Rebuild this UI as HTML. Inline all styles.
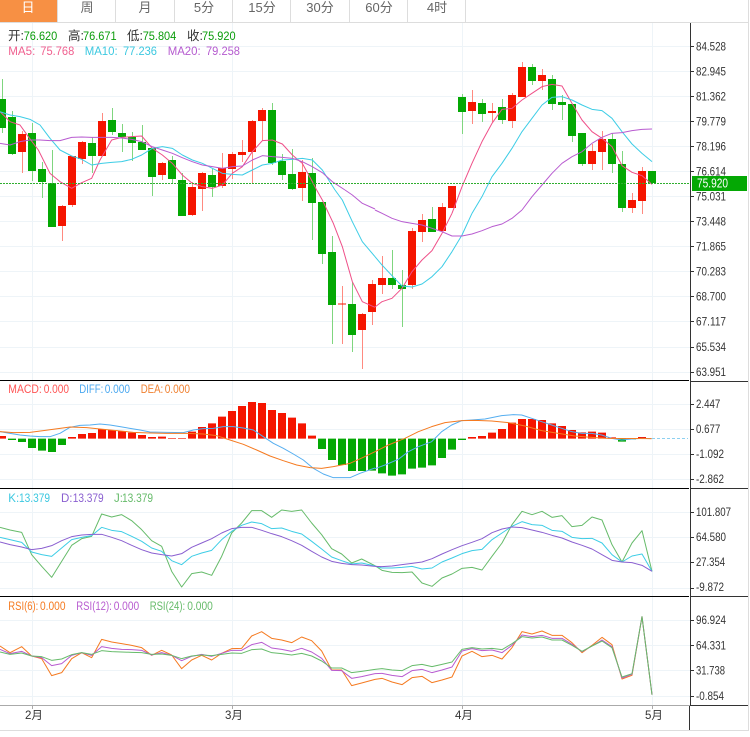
<!DOCTYPE html>
<html><head><meta charset="utf-8"><style>
html,body{margin:0;padding:0;background:#fff}
svg{display:block;font-family:"Liberation Sans","Noto Sans CJK SC",sans-serif}
.l{fill:none;stroke-width:1;vector-effect:non-scaling-stroke;stroke-linejoin:round}
.l polyline{fill:none;stroke-width:1;vector-effect:non-scaling-stroke}
.g{stroke:#eef4f8;stroke-width:1;fill:none}
.a text{font-size:11.5px;fill:#333}
.t text{font-size:13px;fill:#666;text-anchor:middle}
.k text{font-size:11.5px}
.k .c{font-size:12.5px}
</style></head><body>
<svg width="750" height="737" viewBox="0 0 750 737" xmlns="http://www.w3.org/2000/svg">
<rect width="750" height="737" fill="#fff"/>
<!-- tabs -->
<rect x="0" y="0" width="57" height="22" fill="#f79044"/>
<path d="M57.5 0V22M115.5 0V22M174.5 0V22M232.5 0V22M290.5 0V22M349.5 0V22M407.5 0V22M465.5 0V22M0 22.5H748" stroke="#ddd" fill="none"/>
<path d="M748.5 0V730M0 730.5H749" stroke="#ddd" fill="none"/>
<g class="t">
<text x="28" y="12" style="fill:#fff">日</text><text x="87" y="12">周</text><text x="145" y="12">月</text><text x="204" y="12">5分</text><text x="262" y="12">15分</text><text x="320" y="12">30分</text><text x="379" y="12">60分</text><text x="437" y="12">4时</text>
</g>
<!-- grid -->
<path class="g" d="M0 46.5H690M0 71.5H690M0 96.5H690M0 121.5H690M0 146.5H690M0 171.5H690M0 196.5H690M0 221.5H690M0 246.5H690M0 271.5H690M0 296.5H690M0 321.5H690M0 347.5H690M0 372.5H690M0 404.5H690M0 429.5H690M0 454.5H690M0 479.5H690M0 512.5H690M0 537.5H690M0 562.5H690M0 588.5H690M0 620.5H690M0 645.5H690M0 670.5H690M0 696.5H690M32.5 23V705M232.5 23V705M462.5 23V705M652.5 23V705"/>
<!-- candles -->
<path fill="none" stroke="#7fd67f" stroke-width="1" d="M2.5 79V133M12.5 111V155M32.5 123V181M42.5 162V198M52.5 150V227M92.5 137V173M112.5 108V135M122.5 124V152M132.5 132V161M142.5 125V150M152.5 148V196M172.5 156V183M182.5 173V216M212.5 169V197M272.5 103V165M282.5 154V180M292.5 149V190M312.5 158V240M322.5 202V264M332.5 236V344M352.5 282V352M392.5 250V289M402.5 270V327M432.5 207V232M462.5 94V134M482.5 99V122M502.5 99V124M532.5 64V85M552.5 75V110M562.5 95V120M572.5 104V142M582.5 133V166M612.5 133V173M622.5 151V212M652.5 171V183"/>
<path fill="none" stroke="#ff8a80" stroke-width="1" d="M22.5 131V173M62.5 205V241M72.5 156V207M82.5 141V164M102.5 113V156M162.5 162V180M192.5 182V216M202.5 172V211M222.5 153V188M232.5 152V179M242.5 140V162M252.5 120V183M262.5 108V141M302.5 160V201M342.5 286V344M362.5 313V369M372.5 280V325M382.5 256V294M412.5 228V289M422.5 214V242M442.5 203V231M452.5 186V208M472.5 90V124M492.5 103V122M512.5 93V128M522.5 62V97M542.5 69V90M592.5 144V170M602.5 131V170M632.5 193V213M642.5 167V214"/>
<path fill="none" stroke="#04a804" stroke-width="8" d="M2 99V128M12 117V154M32 133V171M42 169V182M52 183V227M92 143V156M112 120V132M122 133V137M132 137V143M142 142V150M152 148V177M172 160V179M182 180V216M212 175V187M272 110V163M282 161V175M292 174V189M312 173V203M322 202V254M332 252V305M352 304V335M392 278V285M402 285V289M432 219V232M462 97V112M482 103V114M502 107V120M532 67V81M552 79V104M562 102V105M572 104V136M582 133V164M612 139V164M622 164V208M652 171V183"/>
<path fill="none" stroke="#f51500" stroke-width="8" d="M22 134V152M62 206V226M72 156V205M82 142V159M102 121V156M162 163V175M192 187V215M202 173V189M222 168V186M232 154V169M242 152V155M252 121V152M262 110V121M302 172V188M342 303.5V304.5M362 314V330M372 284V312M382 278V285M412 231V285M422 220V232M442 207V231M452 186V208M472 102V111M492 111V113M512 95V121M522 67V97M542 75V81M592 151V164M602 139V152M632 200V208M642 171V201"/>
<!-- MA lines -->
<g transform="scale(.33333)">
<polyline class="l" stroke="#ef4f88" points="0,335 30,365 60,375 85,410 115,450 150,520 180,545 215,565 245,548 275,535 300,480 335,420 365,412 395,410 425,408 457,445 487,465 517,490 547,525 577,550 607,560 637,565 667,555 697,520 727,500 757,455 787,422 817,420 847,432 877,465 907,490 937,545 950,570"/>
<polyline class="l" stroke="#3dcde6" points="0,335 30,345 60,350 90,358 120,375 150,415 180,450 215,468 245,478 275,495 305,490 335,487 365,485 395,478 425,465 457,445 487,440 517,445 547,465 577,480 607,490 637,505 667,520 697,523 727,525 757,510 787,495 817,490 847,480 877,478 907,475 937,480 967,510 1005,570"/>
<polyline class="l" stroke="#b85bd0" points="0,430 30,435 60,425 90,420 120,420 150,422 180,422 215,412 245,411 275,412 305,412 335,412 365,414 395,418 425,425 457,440 487,450 517,460 547,473 577,485 607,495 637,500 667,505 697,500 727,498 757,480 787,467 817,470 847,472 877,475 907,485 937,500 967,518 997,545 1035,570"/>
</g>
<g transform="translate(0,190) scale(.33333)">
<polyline class="l" stroke="#ef4f88" points="950,0 967,30 1000,100 1027,170 1057,275 1087,335 1125,352"/>
<polyline class="l" stroke="#3dcde6" points="1005,0 1027,30 1057,95 1087,155 1125,200"/>
<polyline class="l" stroke="#b85bd0" points="1035,0 1057,15 1087,40 1125,57"/>
</g>
<g transform="translate(375,210) scale(.33333)">
<polyline class="l" stroke="#ef4f88" points="0,291 21,275 51,265 81,235 111,185 141,150 171,122 201,70 231,10"/>
<polyline class="l" stroke="#3dcde6" points="0,140 21,165 51,197 81,228 111,231 141,222 171,200 201,170 231,125 261,75 291,10"/>
<polyline class="l" stroke="#b85bd0" points="0,0 21,10 51,25 81,35 111,40 141,45 171,55 201,65 231,78 261,78 291,72 321,62 351,50 381,42 411,25 441,0"/>
</g>
<g transform="translate(375,0) scale(.33333)">
<polyline class="l" stroke="#ef4f88" points="231,640 261,560 291,490 321,425 351,370 381,328 411,325 441,300 471,280 501,260 531,253 561,258 591,310 621,360 651,395 681,415 711,440 741,497 771,517 801,527 831,553"/>
<polyline class="l" stroke="#3dcde6" points="291,640 321,590 351,530 381,490 411,445 441,395 471,355 501,315 531,292 561,290 591,300 621,315 651,328 681,332 711,355 741,395 771,432 801,460 831,485"/>
<polyline class="l" stroke="#b85bd0" points="441,630 471,590 501,555 531,520 561,490 591,470 621,455 651,430 681,412 711,400 741,398 771,392 801,388 831,387"/>
</g>
<!-- dotted price -->
<path d="M0 183.5H690" stroke="#2fae2f" stroke-dasharray="2 1" fill="none"/>
<!-- legend -->
<g class="k">
<text class="c" x="8" y="40" fill="#333">开:</text><text x="23.7" y="40" fill="#0a9c0a" textLength="33.6" lengthAdjust="spacingAndGlyphs">76.620</text>
<text class="c" x="68" y="40" fill="#333">高:</text><text x="83" y="40" fill="#0a9c0a" textLength="33.6" lengthAdjust="spacingAndGlyphs">76.671</text>
<text class="c" x="127" y="40" fill="#333">低:</text><text x="142.7" y="40" fill="#0a9c0a" textLength="33.6" lengthAdjust="spacingAndGlyphs">75.804</text>
<text class="c" x="187" y="40" fill="#333">收:</text><text x="202" y="40" fill="#0a9c0a" textLength="33.6" lengthAdjust="spacingAndGlyphs">75.920</text>
<text x="8.3" y="55" fill="#f0608f" textLength="27" lengthAdjust="spacingAndGlyphs">MA5:</text><text x="40.3" y="55" fill="#f0608f" textLength="34" lengthAdjust="spacingAndGlyphs">75.768</text>
<text x="84.7" y="55" fill="#3cc8e0" textLength="33" lengthAdjust="spacingAndGlyphs">MA10:</text><text x="123" y="55" fill="#3cc8e0" textLength="34" lengthAdjust="spacingAndGlyphs">77.236</text>
<text x="167.7" y="55" fill="#b55bcf" textLength="33" lengthAdjust="spacingAndGlyphs">MA20:</text><text x="206" y="55" fill="#b55bcf" textLength="34" lengthAdjust="spacingAndGlyphs">79.258</text>
<text x="8.3" y="393" fill="#f55" textLength="33.5" lengthAdjust="spacingAndGlyphs">MACD:</text><text x="43.7" y="393" fill="#f55" textLength="25.3" lengthAdjust="spacingAndGlyphs">0.000</text>
<text x="79.3" y="393" fill="#4aa8f0" textLength="24" lengthAdjust="spacingAndGlyphs">DIFF:</text><text x="104.7" y="393" fill="#4aa8f0" textLength="25.3" lengthAdjust="spacingAndGlyphs">0.000</text>
<text x="140.7" y="393" fill="#f08030" textLength="22.5" lengthAdjust="spacingAndGlyphs">DEA:</text><text x="164.7" y="393" fill="#f08030" textLength="25.3" lengthAdjust="spacingAndGlyphs">0.000</text>
<text x="8.3" y="502" fill="#3cc8e0">K:</text><text x="19" y="502" fill="#3cc8e0" textLength="31" lengthAdjust="spacingAndGlyphs">13.379</text>
<text x="61" y="502" fill="#8a5fd0">D:</text><text x="72.7" y="502" fill="#8a5fd0" textLength="31" lengthAdjust="spacingAndGlyphs">13.379</text>
<text x="114" y="502" fill="#66bb6a">J:</text><text x="122" y="502" fill="#66bb6a" textLength="31" lengthAdjust="spacingAndGlyphs">13.379</text>
<text x="8.3" y="610" fill="#f57a20" textLength="30" lengthAdjust="spacingAndGlyphs">RSI(6):</text><text x="40" y="610" fill="#f57a20" textLength="25.5" lengthAdjust="spacingAndGlyphs">0.000</text>
<text x="76.3" y="610" fill="#b85bd0" textLength="35.5" lengthAdjust="spacingAndGlyphs">RSI(12):</text><text x="113.7" y="610" fill="#b85bd0" textLength="25.5" lengthAdjust="spacingAndGlyphs">0.000</text>
<text x="149.7" y="610" fill="#66bb6a" textLength="35.5" lengthAdjust="spacingAndGlyphs">RSI(24):</text><text x="187.3" y="610" fill="#66bb6a" textLength="25.5" lengthAdjust="spacingAndGlyphs">0.000</text>
</g>
<!-- MACD bars -->
<g transform="translate(0,380) scale(1,.33333)">
<path fill="none" stroke="#f51500" stroke-width="8" d="M2 176V168M72 176V171M82 176V162M92 176V159M102 176V147M112 176V150M122 176V153M132 176V158M142 176V165M152 176V171M162 176V170M172 176V174M182 176V174M192 176V155M202 176V141M212 176V130M222 176V110M232 176V93M242 176V78M252 176V66M262 176V69M272 176V90M282 176V99M292 176V113M302 176V130M312 176V167M472 176V171M482 176V168M492 176V158M502 176V147M512 176V128M522 176V117M532 176V117M542 176V120M552 176V130M562 176V138M572 176V150M582 176V157M592 176V155M602 176V158M612 176V172M642 176V171"/>
<path fill="none" stroke="#04a804" stroke-width="8" d="M12 176V180M22 176V186M32 176V204M42 176V212M52 176V216M62 176V195M322 176V207M332 176V240M342 176V255M352 176V273M362 176V273M372 176V272M382 176V280M392 176V287M402 176V283M412 176V266M422 176V263M432 176V256M442 176V234M452 176V209M462 176V180M622 176V185M632 176V178"/>
</g>
<path d="M652 438.5H688" stroke="#8dd0f0" stroke-dasharray="3 2" fill="none"/>
<g transform="translate(0,380) scale(.33333)">
<polyline class="l" stroke="#55aef0" points="0,155 30,160 60,165 90,168 120,170 150,170 180,160 210,142 240,136 270,135 300,132 330,135 360,140 390,145 420,150 450,156 500,157 550,158 580,150 610,146 640,145 670,140 700,140 730,144 760,150 790,170 820,190 850,205 880,222 910,240 940,265 970,282 1000,293 1050,293 1080,280 1125,264"/>
<polyline class="l" stroke="#f57a20" points="0,155 40,158 90,157 130,152 180,145 210,141 260,143 300,147 350,152 400,157 450,159 500,160 560,160 610,162 650,167 690,180 730,193 770,210 810,228 850,242 890,255 930,263 965,265 1000,260 1050,250 1090,232 1125,215"/>
</g>
<g transform="translate(375,380) scale(.33333)">
<polyline class="l" stroke="#55aef0" points="0,266 30,255 70,238 100,215 130,200 170,185 200,155 230,135 260,122 290,120 330,117 380,107 415,104 440,105 470,115 500,125 530,135 560,145 590,155 620,160 650,160 680,165 710,175 740,180 770,177 800,175 830,176"/>
<polyline class="l" stroke="#f57a20" points="0,215 40,195 90,175 130,155 170,140 210,128 260,122 300,121 350,123 400,128 450,138 500,152 550,160 600,168 650,172 700,175 830,176"/>
</g>
<!-- KDJ -->
<g transform="translate(0,488) scale(.33333)">
<polyline class="l" stroke="#66bb6a" points="0,118 30,126 65,133 95,200 125,235 155,268 185,220 215,172 245,152 275,145 305,78 335,87 365,80 395,98 425,125 455,158 485,175 515,250 545,297 575,257 605,252 635,262 665,205 695,135 725,105 755,68 785,68 815,88 845,66 875,70 905,66 935,105 965,140 995,182 1025,198 1055,225 1085,213 1125,233"/>
<polyline class="l" stroke="#3dcde6" points="0,148 30,155 65,163 95,192 125,200 155,205 185,180 215,155 245,148 275,143 305,118 335,127 365,131 395,145 425,160 455,180 485,190 515,218 545,230 575,205 605,195 635,187 665,155 695,130 725,112 755,102 785,107 815,122 845,120 875,130 905,138 935,160 965,183 995,207 1025,218 1055,228 1085,225 1125,234"/>
<polyline class="l" stroke="#8a5fd0" points="0,162 30,170 65,177 95,185 125,181 155,173 185,158 215,146 245,141 275,139 305,139 335,148 365,158 395,172 425,185 455,195 485,200 515,204 545,197 575,178 605,165 635,152 665,135 695,122 725,118 755,118 785,127 815,137 845,146 875,158 905,172 935,190 965,207 995,220 1025,226 1055,230 1085,231 1125,235"/>
</g>
<g transform="translate(375,488) scale(.33333)">
<polyline class="l" stroke="#66bb6a" points="0,233 21,247 51,253 81,254 111,252 141,285 171,295 201,270 231,258 261,241 291,238 321,246 351,205 381,165 411,110 441,70 471,80 501,70 531,88 561,83 591,116 621,112 651,87 681,96 711,170 741,222 771,165 801,128 831,250"/>
<polyline class="l" stroke="#3dcde6" points="0,234 21,240 51,240 81,238 111,235 141,243 171,240 201,222 231,210 261,197 291,188 321,184 351,155 381,135 411,115 441,101 471,110 501,112 531,127 561,130 591,148 621,152 651,151 681,165 711,200 741,222 771,204 801,198 831,250"/>
<polyline class="l" stroke="#8a5fd0" points="0,235 21,236 51,234 81,230 111,226 141,222 171,212 201,198 231,185 261,173 291,163 321,152 351,134 381,123 411,117 441,119 471,126 501,133 531,142 561,150 591,162 621,172 651,183 681,200 711,217 741,222 771,224 801,232 831,250"/>
</g>
<!-- RSI -->
<g transform="translate(0,596) scale(.33333)">
<polyline class="l" stroke="#f57a20" points="0,150 30,170 65,152 95,180 125,188 155,239 185,230 215,188 245,170 275,185 305,130 335,138 365,143 395,148 425,155 455,178 485,163 515,177 545,218 575,192 605,178 635,192 665,172 695,158 725,157 755,120 785,107 815,127 845,132 875,140 905,123 935,134 965,165 995,222 1025,222 1055,269 1085,261 1125,250"/>
<polyline class="l" stroke="#b85bd0" points="0,160 30,173 65,166 95,180 125,185 155,209 185,203 215,178 245,170 275,178 305,152 335,157 365,160 395,161 425,163 455,177 485,170 515,178 545,194 575,181 605,175 635,181 665,172 695,163 725,163 755,146 785,139 815,156 845,160 875,166 905,157 935,168 965,187 995,223 1025,224 1055,247 1085,242 1125,233"/>
<polyline class="l" stroke="#66bb6a" points="0,168 30,175 65,171 95,180 125,182 155,193 185,189 215,176 245,170 275,175 305,164 335,167 365,168 395,169 425,170 455,175 485,174 515,178 545,188 575,180 605,177 635,179 665,175 695,171 725,172 755,161 785,159 815,170 845,173 875,177 905,172 935,180 965,195 995,216 1025,216 1055,230 1085,226 1125,220"/>
</g>
<g transform="translate(375,596) scale(.33333)">
<polyline class="l" stroke="#f57a20" points="0,250 21,247 51,258 81,266 111,245 141,241 171,260 201,252 231,243 261,180 291,166 321,182 351,178 381,189 411,155 441,107 471,114 501,105 531,118 561,118 591,140 621,170 651,148 681,124 711,146 741,249 771,238 801,62 831,296"/>
<polyline class="l" stroke="#b85bd0" points="0,233 21,232 51,238 81,242 111,224 141,220 171,230 201,222 231,213 261,165 291,158 321,164 351,162 381,170 411,148 441,117 471,122 501,118 531,127 561,127 591,145 621,167 651,150 681,132 711,152 741,246 771,235 801,62 831,296"/>
<polyline class="l" stroke="#66bb6a" points="0,220 21,218 51,222 81,224 111,209 141,205 171,212 201,205 231,198 261,160 291,155 321,159 351,157 381,161 411,143 441,122 471,126 501,123 531,132 561,132 591,148 621,166 651,150 681,135 711,155 741,243 771,233 801,62 831,296"/>
</g>
<!-- frame lines -->
<path d="M0 380.5H689M0 488.5H689M0 596.5H689" stroke="#000" fill="none"/>
<path d="M690.5 23V705M689.5 705V730M691 381.5H748M691 488.5H748M691 596.5H748M690 705.5H748" stroke="#333" fill="none"/>
<path d="M0 705.5H690M32.5 705V709M232.5 705V709M462.5 705V709M652.5 705V709" stroke="#aaa" fill="none"/>
<!-- axis ticks -->
<path d="M691 46.5h3M691 71.5h3M691 96.5h3M691 121.5h3M691 146.5h3M691 171.5h3M691 196.5h3M691 221.5h3M691 246.5h3M691 271.5h3M691 296.5h3M691 321.5h3M691 347.5h3M691 372.5h3M691 404.5h3M691 429.5h3M691 454.5h3M691 479.5h3M691 512.5h3M691 537.5h3M691 562.5h3M691 588.5h3M691 620.5h3M691 645.5h3M691 670.5h3M691 696.5h3" stroke="#333" fill="none"/>
<!-- price tag -->
<rect x="692" y="176" width="55" height="15" fill="#04a804"/>
<text x="697" y="187.5" font-size="12.5" fill="#fff" textLength="31" lengthAdjust="spacingAndGlyphs">75.920</text>
<!-- axis labels -->
<g class="a">
<text x="696" y="50.5" textLength="30" lengthAdjust="spacingAndGlyphs">84.528</text>
<text x="696" y="75.5" textLength="30" lengthAdjust="spacingAndGlyphs">82.945</text>
<text x="696" y="100.5" textLength="30" lengthAdjust="spacingAndGlyphs">81.362</text>
<text x="696" y="125.5" textLength="30" lengthAdjust="spacingAndGlyphs">79.779</text>
<text x="696" y="150.5" textLength="30" lengthAdjust="spacingAndGlyphs">78.196</text>
<text x="696" y="175.5" textLength="30" lengthAdjust="spacingAndGlyphs">76.614</text>
<text x="696" y="200.5" textLength="30" lengthAdjust="spacingAndGlyphs">75.031</text>
<text x="696" y="225.5" textLength="30" lengthAdjust="spacingAndGlyphs">73.448</text>
<text x="696" y="250.5" textLength="30" lengthAdjust="spacingAndGlyphs">71.865</text>
<text x="696" y="275.5" textLength="30" lengthAdjust="spacingAndGlyphs">70.283</text>
<text x="696" y="300.5" textLength="30" lengthAdjust="spacingAndGlyphs">68.700</text>
<text x="696" y="325.5" textLength="30" lengthAdjust="spacingAndGlyphs">67.117</text>
<text x="696" y="351" textLength="30" lengthAdjust="spacingAndGlyphs">65.534</text>
<text x="696" y="376" textLength="30" lengthAdjust="spacingAndGlyphs">63.951</text>
<text x="696" y="408" textLength="24.3" lengthAdjust="spacingAndGlyphs">2.447</text>
<text x="696" y="433" textLength="24.3" lengthAdjust="spacingAndGlyphs">0.677</text>
<text x="696" y="458" textLength="28" lengthAdjust="spacingAndGlyphs">-1.092</text>
<text x="696" y="483" textLength="28" lengthAdjust="spacingAndGlyphs">-2.862</text>
<text x="696" y="516" textLength="35" lengthAdjust="spacingAndGlyphs">101.807</text>
<text x="696" y="541" textLength="30" lengthAdjust="spacingAndGlyphs">64.580</text>
<text x="696" y="566" textLength="29" lengthAdjust="spacingAndGlyphs">27.354</text>
<text x="696" y="591" textLength="28" lengthAdjust="spacingAndGlyphs">-9.872</text>
<text x="696" y="624" textLength="30" lengthAdjust="spacingAndGlyphs">96.924</text>
<text x="696" y="649.5" textLength="30" lengthAdjust="spacingAndGlyphs">64.331</text>
<text x="696" y="674.5" textLength="29" lengthAdjust="spacingAndGlyphs">31.738</text>
<text x="696" y="700" textLength="28" lengthAdjust="spacingAndGlyphs">-0.854</text>
<text x="25" y="719">2月</text><text x="225" y="719">3月</text><text x="455" y="719">4月</text><text x="645" y="719">5月</text>
</g>
</svg>
</body></html>
